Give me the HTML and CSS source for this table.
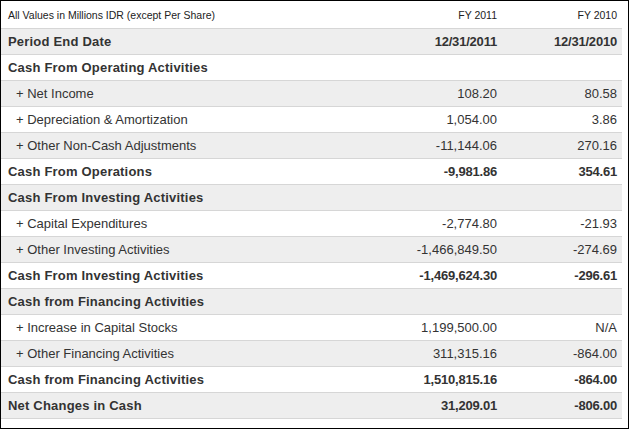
FILE: index.html
```html
<!DOCTYPE html>
<html>
<head>
<meta charset="utf-8">
<link rel="stylesheet" href="styles.css">
</head>
<body>
<div class="frame">
<table class="fin">
<tr class="head"><td class="label">All Values in Millions IDR (except Per Share)</td><td class="num">FY 2011</td><td class="num">FY 2010</td></tr>
<tr class="alt bold"><td class="label">Period End Date</td><td class="num">12/31/2011</td><td class="num">12/31/2010</td></tr>
<tr class="bold"><td class="label">Cash From Operating Activities</td><td class="num"></td><td class="num"></td></tr>
<tr class="alt"><td class="label sub">+ Net Income</td><td class="num">108.20</td><td class="num">80.58</td></tr>
<tr><td class="label sub">+ Depreciation &amp; Amortization</td><td class="num">1,054.00</td><td class="num">3.86</td></tr>
<tr class="alt"><td class="label sub">+ Other Non-Cash Adjustments</td><td class="num">-11,144.06</td><td class="num">270.16</td></tr>
<tr class="bold"><td class="label">Cash From Operations</td><td class="num">-9,981.86</td><td class="num">354.61</td></tr>
<tr class="alt bold"><td class="label">Cash From Investing Activities</td><td class="num"></td><td class="num"></td></tr>
<tr><td class="label sub">+ Capital Expenditures</td><td class="num">-2,774.80</td><td class="num">-21.93</td></tr>
<tr class="alt"><td class="label sub">+ Other Investing Activities</td><td class="num">-1,466,849.50</td><td class="num">-274.69</td></tr>
<tr class="bold"><td class="label">Cash From Investing Activities</td><td class="num">-1,469,624.30</td><td class="num">-296.61</td></tr>
<tr class="alt bold"><td class="label">Cash from Financing Activities</td><td class="num"></td><td class="num"></td></tr>
<tr><td class="label sub">+ Increase in Capital Stocks</td><td class="num">1,199,500.00</td><td class="num">N/A</td></tr>
<tr class="alt"><td class="label sub">+ Other Financing Activities</td><td class="num">311,315.16</td><td class="num">-864.00</td></tr>
<tr class="bold"><td class="label">Cash from Financing Activities</td><td class="num">1,510,815.16</td><td class="num">-864.00</td></tr>
<tr class="alt bold"><td class="label">Net Changes in Cash</td><td class="num">31,209.01</td><td class="num">-806.00</td></tr>
</table>
</div>
</body>
</html>
```

FILE: styles.css
```css
html, body {
  margin: 0;
  padding: 0;
  background: #fff;
}
.frame {
  box-sizing: border-box;
  width: 629px;
  height: 429px;
  border: 1px solid #000;
  background: #fff;
}
.fin {
  width: 621px;
  border-collapse: collapse;
  font-family: "Liberation Sans", Arial, sans-serif;
  color: #333;
}
.fin td {
  height: 25px;
  padding: 0 5px 0 7px;
  border-bottom: 1px solid #d6d6d6;
  font-size: 13px;
  white-space: nowrap;
  vertical-align: middle;
}
.fin .head td {
  height: 27px;
  font-size: 10.5px;
  color: #222;
}
.fin .alt td {
  background: #eeeeee;
}
.fin .bold td {
  font-weight: bold;
  font-size: 13px;
  letter-spacing: 0.2px;
}
.fin .bold .num {
  letter-spacing: -0.2px;
}
.fin .sub {
  padding-left: 15px;
}
.fin .num {
  text-align: right;
  width: 108px;
}
```
